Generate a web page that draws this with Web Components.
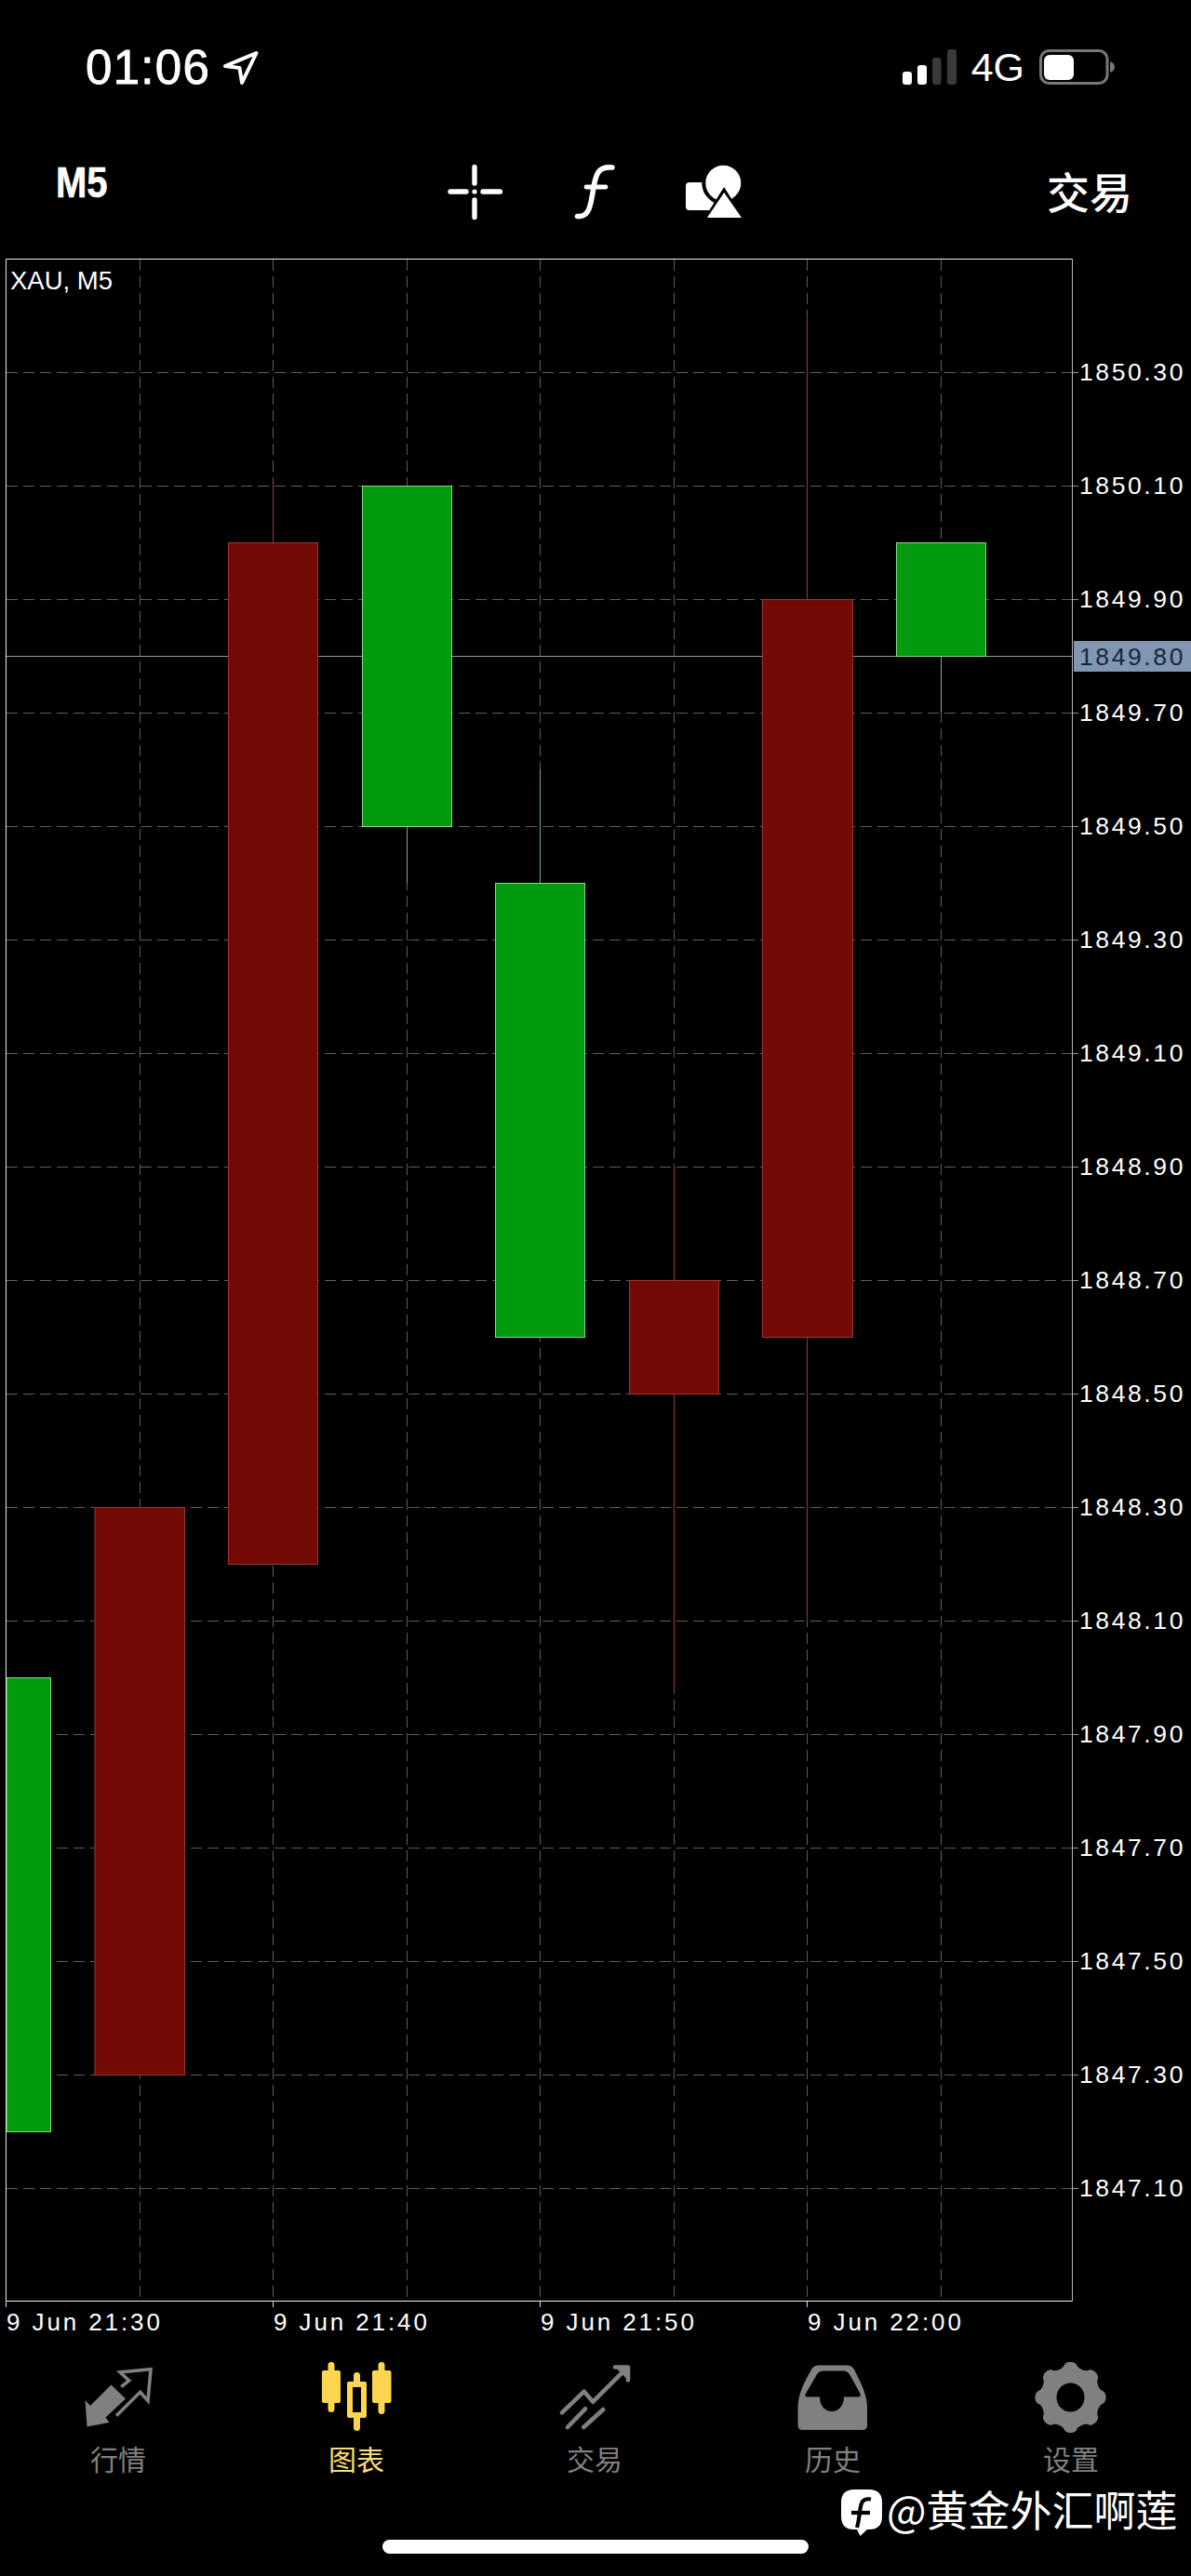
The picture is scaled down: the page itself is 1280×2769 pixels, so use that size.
<!DOCTYPE html>
<html lang="zh">
<head>
<meta charset="utf-8">
<title>XAU, M5</title>
<style>
html,body{margin:0;padding:0;background:#000;}
body{width:1280px;height:2769px;overflow:hidden;position:relative;color:#fff;font-family:"Liberation Sans","Noto Sans CJK SC",sans-serif;}
</style>
</head>
<body>
<status-bar></status-bar>
<tool-bar></tool-bar>
<chart-view></chart-view>
<time-axis></time-axis>
<tab-bar>
  <tab-item label="行情">
    <svg slot="icon" width="100" height="90" viewBox="78 2530 100 90">
      <g transform="translate(80 2530)">
        <path fill="#808080" d="M39.5 33.5 55 48.5 33.5 68.5 37.5 74 13.5 78.5 11.5 50 17 56Z"/>
        <path fill="none" stroke="#808080" stroke-width="3.6" d="M50.3 35.7 58.7 29 49 20 82 16.7 79 50.7 70.7 41.3 45 66.7"/>
      </g>
    </svg>
  </tab-item>
  <tab-item label="图表" active>
    <svg slot="icon" width="100" height="90" viewBox="334 2530 100 90">
      <g fill="#fdd550">
        <rect x="352.500" y="2539" width="7" height="54" rx="3.500"/>
        <rect x="346" y="2548" width="20" height="35" rx="2"/>
        <rect x="406.500" y="2539" width="7" height="56" rx="3.500"/>
        <rect x="400" y="2548" width="20.500" height="35" rx="2"/>
        <path d="M380 2561V2553.500a3.500 3.500 0 0 1 7 0V2561ZM380 2598V2609.500a3.500 3.500 0 0 0 7 0V2598Z"/>
        <path fill-rule="evenodd" d="M375 2560H392Q394 2560 394 2562V2597Q394 2599 392 2599H375Q373 2599 373 2597V2562Q373 2560 375 2560ZM379 2566V2593H388V2566Z"/>
      </g>
    </svg>
  </tab-item>
  <tab-item label="交易">
    <svg slot="icon" width="100" height="90" viewBox="0 0 100 90">
      <g fill="none" stroke="#808080" stroke-width="4.600" stroke-linecap="round" stroke-linejoin="round">
        <path d="M14 63.300 37.700 40.700 47.300 51.700 81.700 17.300"/>
        <path fill="#808080" d="M71 14.500H85V28.500"/>
        <path d="M20 79 39 59.300"/>
        <path d="M37.300 79 58.300 60"/>
      </g>
    </svg>
  </tab-item>
  <tab-item label="历史">
    <svg slot="icon" width="100" height="90" viewBox="846 2530 100 90">
      <path fill="#808080" fill-rule="evenodd" d="M881 2542.500H909C914 2542.500 917 2544 919 2549C925 2561 932 2574 932 2588V2607Q932 2612 927 2612H862.500Q857.500 2612 857.500 2607V2588C857.500 2574 864 2561 871 2549C873 2544 876 2542.500 881 2542.500ZM886 2548.500C881 2548.500 879 2550 877 2554L866.500 2572C864.500 2575 865.500 2576.500 868 2576.500H881C881 2586 886.500 2592 894 2592C901.500 2592 907 2586 907 2576.500H922C924.500 2576.500 925.500 2575 924 2572L914 2554C912 2550 910 2548.500 905 2548.500Z"/>
    </svg>
  </tab-item>
  <tab-item label="设置">
    <svg slot="icon" width="100" height="90" viewBox="1102 2530 100 90">
      <path id="gear" fill="#808080" fill-rule="evenodd" d=""/>
    </svg>
  </tab-item>
</tab-bar>
<water-mark></water-mark>
<home-indicator></home-indicator>

<script>
const FONT = '"Liberation Sans","Noto Sans CJK SC",sans-serif';
const CJK = '"Noto Sans CJK SC","Liberation Sans",sans-serif';

function shadow(el, html) {
  el.attachShadow({mode: 'open'}).innerHTML = html;
}

class StatusBar extends HTMLElement {
  constructor() {
    super();
    shadow(this, `<style>
      :host{display:flex;height:130px;box-sizing:border-box;padding:53px 82px 0 92px;align-items:flex-start;color:#fff;font-family:${FONT};}
      .time{font-size:51px;line-height:40px;letter-spacing:1.300px;-webkit-text-stroke:.9px #fff;}
      .loc{display:block;margin-left:13px;}
      .right{margin-left:auto;display:flex;align-items:flex-start;}
      .g{font-size:43px;line-height:38px;margin:0 16px 0 16px;height:38px;}
      svg{display:block;}
    </style>
    <span class="time">01:06</span>
    <svg class="loc" width="40" height="40" viewBox="241 53 40 40"><path fill="none" stroke="#fff" stroke-width="4" stroke-linejoin="round" d="M277.500 57 244 71 259.500 73 262 89Z"/></svg>
    <div class="right">
      <svg width="58" height="38" viewBox="970 53 58 38">
        <rect x="970" y="77" width="10" height="14" rx="3" fill="#fff"/>
        <rect x="986" y="70" width="10" height="21" rx="3" fill="#fff"/>
        <rect x="1002" y="62" width="9.500" height="29" rx="3" fill="#3a3a3a"/>
        <rect x="1018" y="53" width="10" height="38" rx="3" fill="#3a3a3a"/>
      </svg>
      <span class="g">4G</span>
      <svg width="81" height="38" viewBox="1117 53 81 38">
        <rect x="1118.500" y="54.500" width="71.500" height="35" rx="9" fill="none" stroke="#777" stroke-width="3"/>
        <rect x="1122" y="59" width="32" height="27" rx="6" fill="#fff"/>
        <path d="M1193 66q5 2 5 6t-5 6z" fill="#777"/>
      </svg>
    </div>`);
  }
}

class ToolBar extends HTMLElement {
  constructor() {
    super();
    shadow(this, `<style>
      :host{display:flex;height:148px;box-sizing:border-box;padding:47px 63px 0 60px;align-items:flex-start;color:#fff;}
      svg{display:block;flex:none;}
      .tf{width:421px;flex:none;font:bold 46px/38px ${FONT};-webkit-text-stroke:.6px #fff;}
      .tf span{display:inline-block;transform:scaleX(.87);transform-origin:0 50%;}
      .trade{margin-left:auto;font:500 46px/46px ${CJK};margin-top:4px;}
      .x1{margin-right:74px;}
      .x2{margin-right:72px;}
    </style>
    <div class="tf"><span>M5</span></div>
    <svg class="x1" width="60" height="60" viewBox="481 177 60 60">
      <g stroke="#fff" stroke-width="5.400" stroke-linecap="round">
        <path d="M484 206H501M519 206H537.500M510 179.500V197M510 215V233.500"/>
      </g>
      <circle cx="510" cy="206" r="2.600" fill="#fff"/>
    </svg>
    <svg class="x2" width="50" height="60" viewBox="615 177 50 60">
      <g fill="none" stroke="#fff" stroke-linecap="round">
        <path stroke-width="5.600" d="M658 180C643 178.500 640.500 187 638 201C635 219 634 234 620.500 232.500"/>
        <path stroke-width="4.800" d="M630 201H651"/>
      </g>
    </svg>
    <svg width="61" height="60" viewBox="737 177 61 60">
      <rect x="737" y="196" width="30" height="30" rx="4" fill="#fff"/>
      <circle cx="777.300" cy="196.700" r="21" fill="#fff" stroke="#000" stroke-width="4"/>
      <path d="M778.200 201 756 236H800Z" fill="#000"/>
      <path d="M778.200 207 760 234H797Z" fill="#fff"/>
    </svg>
    <div class="trade">交易</div>`);
  }
}

class ChartView extends HTMLElement {
  constructor() {
    super();
    const Y = p => 644 + Math.round((1849.9 - p) * 10) * 61;
    const xs = [150.5, 293.5, 437.5, 580.5, 724.5, 867.5, 1011.5];
    const prices = [];
    for (let i = 0; i < 17; i++) prices.push((1850.3 - i * 0.2).toFixed(2));
    let grid = '';
    for (const x of xs) grid += `<line x1="${x}" x2="${x}" y1="279" y2="2473"/>`;
    for (const p of prices) { const y = Y(+p) + .5; grid += `<line x1="7" x2="1152" y1="${y}" y2="${y}"/>`; }
    const body = (x0, x1, t, b, up) =>
      `<rect x="${x0}" y="${t + .5}" width="${x1 - x0}" height="${b - t}" fill="${up ? '#029a0e' : '#730a05'}" stroke="${up ? '#86dc82' : '#97392f'}" stroke-width="1"/>`;
    const wick = (x, t, b, up) =>
      `<line x1="${x}" x2="${x}" y1="${t}" y2="${b}" stroke="${up ? '#7fb07f' : '#a5352b'}"/>`;
    let c = '';
    c += body(7, 54.500, Y(1848.0), Y(1847.2), true);
    c += body(102, 198.500, Y(1848.3), Y(1847.3), false);
    c += wick(293.5, Y(1850.1), Y(1850.0), false) + body(245.500, 341.500, Y(1850.0), Y(1848.2), false);
    c += wick(437.5, Y(1849.5), Y(1849.4), true) + body(389.500, 485.500, Y(1850.1), Y(1849.5), true);
    c += wick(580.5, Y(1849.6), Y(1849.4), true) + body(532.500, 628.500, Y(1849.4), Y(1848.6), true);
    c += wick(724.5, Y(1848.9), Y(1848.0) + 8, false) + body(676.500, 772.500, Y(1848.7), Y(1848.5), false);
    c += wick(867.5, Y(1850.4), Y(1848.1), false) + body(819.500, 916.500, Y(1849.9), Y(1848.6), false);
    c += wick(1011.5, Y(1849.8), Y(1849.7), true) + body(963.500, 1059.500, Y(1850.0), Y(1849.8), true);

    shadow(this, `<style>
      :host{display:flex;height:2196px;position:relative;padding-left:6px;font-family:${FONT};color:#fff;}
      svg{display:block;flex:none;}
      .sym{position:absolute;left:11px;top:8px;font-size:27.500px;line-height:32px;}
      .axis{flex:1;padding-top:61px;position:relative;}
      .row{height:122px;display:flex;align-items:center;font-size:26.500px;letter-spacing:2.600px;white-space:nowrap;}
      .row::before{content:"";width:6px;height:1px;background:#999;margin-right:1px;flex:none;}
      .now{position:absolute;left:1px;right:0;top:411px;height:33px;background:#8096b2;color:#1a2638;font-size:26.500px;line-height:34px;letter-spacing:2.600px;padding-left:6px;box-sizing:border-box;}
    </style>
    <svg width="1147" height="2196" viewBox="6 278 1147 2196">
      <g stroke="#5e5e5e" stroke-width="1" stroke-dasharray="12 6">${grid}</g>
      <line x1="7" x2="1152" y1="705.500" y2="705.500" stroke="#9a9a9a"/>
      ${c}
      <g stroke-width="1" fill="none">
        <path d="M6.500 2473.500V278.500H1152" stroke="#f0f0f0"/>
        <path d="M6.500 2473.500H1152" stroke="#f0f0f0"/>
        <path d="M1152.500 278V2474" stroke="#b5b5b5"/>
      </g>
    </svg>
    <div class="sym">XAU, M5</div>
    <div class="axis">
      ${prices.map(p => `<div class="row">${p}</div>`).join('')}
      <div class="now">1849.80</div>
    </div>`);
  }
}

class TimeAxis extends HTMLElement {
  constructor() {
    super();
    const labels = ['9 Jun 21:30', '9 Jun 21:40', '9 Jun 21:50', '9 Jun 22:00'];
    shadow(this, `<style>
      :host{display:flex;height:56px;padding-left:6px;font-family:${FONT};color:#fff;}
      .t{width:287px;flex:none;font-size:26px;line-height:30px;letter-spacing:2.900px;white-space:nowrap;}
      .t::before{content:"";display:block;width:1px;height:6px;background:#ddd;margin-bottom:1px;}
      .t span{display:block;padding-left:1px;}
    </style>
    ${labels.map(l => `<div class="t"><span>${l}</span></div>`).join('')}`);
  }
}

class TabBar extends HTMLElement {
  constructor() {
    super();
    shadow(this, `<style>:host{display:flex;height:140px;}</style><slot></slot>`);
  }
}

class TabItem extends HTMLElement {
  constructor() {
    super();
    const active = this.hasAttribute('active');
    shadow(this, `<style>
      :host{flex:1;display:flex;flex-direction:column;align-items:center;}
      ::slotted(svg){display:block;}
      .l{margin:7px 2px 0 0;font:400 30px/30px ${CJK};color:${active ? '#fbdc72' : '#808080'};}
    </style>
    <slot name="icon"></slot>
    <div class="l">${this.getAttribute('label')}</div>`);
  }
}

class WaterMark extends HTMLElement {
  constructor() {
    super();
    shadow(this, `<style>
      :host{position:absolute;left:904px;top:2672px;display:flex;align-items:flex-start;color:#fff;}
      svg{display:block;margin-top:4px;}
      .t{margin-left:5px;font:400 45px/50px ${CJK};white-space:nowrap;}
    </style>
    <svg width="44" height="50" viewBox="904 2676 44 50">
      <path fill="#fff" d="M918 2676H934Q948 2676 948 2690V2705Q948 2719 934 2719H932L924.500 2726 921 2719H918Q904 2719 904 2705V2690Q904 2676 918 2676Z"/>
      <g fill="none" stroke="#000" stroke-width="4.200" stroke-linecap="butt">
        <path d="M936 2686.500C927 2685 925.500 2690 924.500 2697C923.500 2704 923 2710 921 2717"/>
        <path d="M915 2701H935"/>
      </g>
    </svg>
    <span class="t">@黄金外汇啊莲</span>`);
  }
}

class HomeIndicator extends HTMLElement {
  constructor() {
    super();
    shadow(this, `<style>
      :host{position:absolute;left:411px;top:2730px;width:458px;height:15px;border-radius:8px;background:#fff;display:block;}
    </style>`);
  }
}

customElements.define('status-bar', StatusBar);
customElements.define('tool-bar', ToolBar);
customElements.define('chart-view', ChartView);
customElements.define('time-axis', TimeAxis);
customElements.define('tab-bar', TabBar);
customElements.define('tab-item', TabItem);
customElements.define('water-mark', WaterMark);
customElements.define('home-indicator', HomeIndicator);

(function () {
  const cx = 1150.5, cy = 2577;
  let d = '';
  for (let i = 0; i <= 240; i++) {
    const a = i / 240 * Math.PI * 2;
    const w = Math.cos(8 * a);
    const r = 35.2 + 2.9 * Math.sign(w) * Math.pow(Math.abs(w), .6);
    const x = cx + r * Math.sin(a), y = cy - r * Math.cos(a);
    d += (i ? 'L' : 'M') + x.toFixed(2) + ' ' + y.toFixed(2);
  }
  d += 'Z M' + (cx - 15) + ' ' + cy + 'a15 15.500 0 1 0 30 0a15 15.500 0 1 0 -30 0Z';
  document.getElementById('gear').setAttribute('d', d);
})();
</script>
</body>
</html>
